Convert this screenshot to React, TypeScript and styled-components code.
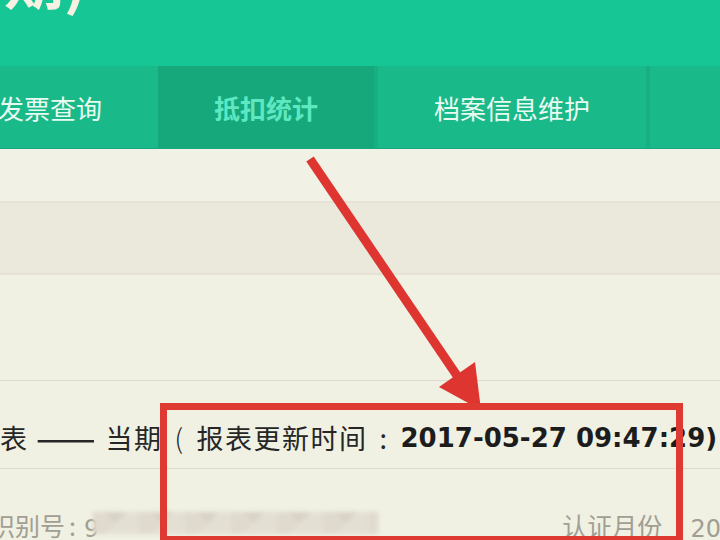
import styled, { createGlobalStyle } from "styled-components";

// ------------ global page styles ------------
const GlobalStyle = createGlobalStyle`
  html, body {
    margin: 0;
    padding: 0;
    background: #f0f0e3;
    overflow: hidden;
  }
  body {
    font-family: "Noto Sans CJK SC", "Noto Sans", sans-serif;
  }
`;

const tabs = [
  { label: "发票查询", active: false },
  { label: "抵扣统计", active: true },
  { label: "档案信息维护", active: false },
  { label: "", active: false },
];

function App() {
  return (
    <>
      <GlobalStyle />
      <Page>
        {/* ------ top banner ------ */}
        <Banner>
          <BannerTitle>期)</BannerTitle>
        </Banner>

        {/* ------ main navigation ------ */}
        <NavBar>
          {tabs.map((t, i) => (
            <NavTab key={i} $active={t.active} $first={i === 0}>
              {t.label}
            </NavTab>
          ))}
        </NavBar>

        {/* ------ breadcrumb + filter band ------ */}
        <Crumbs />
        <FilterBand />
        <Spacer />

        {/* ------ report heading ------ */}
        <ReportTitle>
          <span>表</span>
          <Dash>——</Dash>
          <span>当期</span>
          <Paren>(</Paren>
          <span>报表更新时间</span>
          <Colon>:</Colon>
          <Stamp>2017-05-27 09:47:29)</Stamp>
        </ReportTitle>

        {/* ------ taxpayer info row ------ */}
        <InfoRow>
          <InfoLabel $cut>识别号</InfoLabel>
          <Colon>:</Colon>
          <InfoValue>9</InfoValue>
          <Redacted />
          <Grow />
          <InfoLabel>认证月份</InfoLabel>
          <InfoValue $gap>201705</InfoValue>
        </InfoRow>

        {/* ------ callout annotation ------ */}
        <Arrow viewBox="0 0 720 540" width="720" height="540">
          <line
            x1="310"
            y1="159"
            x2="462"
            y2="383"
            stroke="#de3530"
            strokeWidth="9"
          />
          <polygon points="481,410 475,362 439,387" fill="#de3530" />
        </Arrow>
        <Callout />
      </Page>
    </>
  );
}

export default App;

// ------- component styles -------
const Page = styled.div`
  position: relative;
  width: 720px;
  height: 540px;
  overflow: hidden;
  background: #f0f0e3;
  display: flex;
  flex-direction: column;
`;

const Banner = styled.header`
  height: 66px;
  flex-shrink: 0;
  background: #16c695;
  overflow: hidden;
`;

const BannerTitle = styled.h1`
  margin: -52px 0 0 4px;
  font-size: 60px;
  line-height: 60px;
  font-weight: 700;
  color: #f6f1e2;
  white-space: nowrap;
`;

const NavBar = styled.nav`
  height: 82px;
  flex-shrink: 0;
  display: flex;
  background: #19b989;
  border-bottom: 1px solid #14a87c;
  margin-left: -58px;
`;

const NavTab = styled.div<{ $active: boolean; $first: boolean }>`
  flex-shrink: 0;
  display: flex;
  align-items: center;
  justify-content: center;
  padding: 0 56px;
  min-width: 50px;
  font-size: 26px;
  color: ${(p) => (p.$active ? "#5ee8c1" : "#e9fbf1")};
  font-weight: ${(p) => (p.$active ? 700 : 400)};
  background: ${(p) => (p.$active ? "#16a77b" : "transparent")};
  border-left: ${(p) =>
    p.$first || p.$active ? "none" : "4px solid rgba(0, 80, 50, 0.08)"};
  white-space: nowrap;
`;

const Crumbs = styled.div`
  height: 52px;
  flex-shrink: 0;
  background: #f1f2e5;
`;

const FilterBand = styled.div`
  height: 74px;
  flex-shrink: 0;
  background: #ebe9dc;
  border-top: 2px solid #e6e3d5;
  border-bottom: 2px solid #e6e3d5;
  box-sizing: border-box;
`;

const Spacer = styled.div`
  height: 105px;
  flex-shrink: 0;
  border-bottom: 1px solid #dedbce;
`;

const ReportTitle = styled.h2`
  height: 88px;
  flex-shrink: 0;
  margin: 0;
  display: flex;
  align-items: center;
  padding-top: 26px;
  box-sizing: border-box;
  font-size: 27px;
  font-weight: 400;
  color: #262626;
  white-space: nowrap;
  border-bottom: 1px solid #dedbce;
  letter-spacing: 1.5px;
`;

const Dash = styled.span`
  display: inline-block;
  width: 60px;
  margin: 0 10px 0 7px;
  transform: scaleX(1.3);
  transform-origin: left center;
  font-weight: 700;
  letter-spacing: -2px;
`;

const Paren = styled.span`
  margin: 0 12px 0 12px;
  font-weight: 300;
`;

const Colon = styled.span`
  margin: 0 12px 0 12px;
`;

const Stamp = styled.span`
  font-family: "DejaVu Sans", sans-serif;
  font-weight: 700;
  font-size: 26px;
  letter-spacing: 0;
  color: #1c1c1c;
`;

const InfoRow = styled.div`
  flex: 1;
  display: flex;
  align-items: flex-end;
  margin-bottom: -3px;
  font-size: 25px;
  color: #a19e93;
  white-space: nowrap;

  & > ${Colon} {
    margin: 0 8px 0 4px;
  }
`;

const InfoLabel = styled.span<{ $cut?: boolean }>`
  margin-left: ${(p) => (p.$cut ? "-10px" : "0")};
`;

const InfoValue = styled.span<{ $gap?: boolean }>`
  margin-left: ${(p) => (p.$gap ? "28px" : "0")};
  margin-right: ${(p) => (p.$gap ? "-62px" : "0")};
  font-family: "DejaVu Sans", sans-serif;
  font-size: 24px;
`;

const Redacted = styled.span`
  width: 285px;
  height: 22px;
  margin: 0 0 9px -6px;
  background: linear-gradient(135deg, transparent 50%, #e3dfd3 50%) 0 0 / 46px
      22px,
    linear-gradient(225deg, transparent 50%, #dfdacd 50%) 0 0 / 46px 22px,
    #d8d2c6;
  filter: blur(2px);
`;

const Grow = styled.span`
  flex: 1;
`;

const Arrow = styled.svg`
  position: absolute;
  left: 0;
  top: 0;
  pointer-events: none;
`;

const Callout = styled.div`
  position: absolute;
  left: 160px;
  top: 403px;
  width: 523px;
  height: 140px;
  box-sizing: border-box;
  border: 7px solid #de3a31;
`;
